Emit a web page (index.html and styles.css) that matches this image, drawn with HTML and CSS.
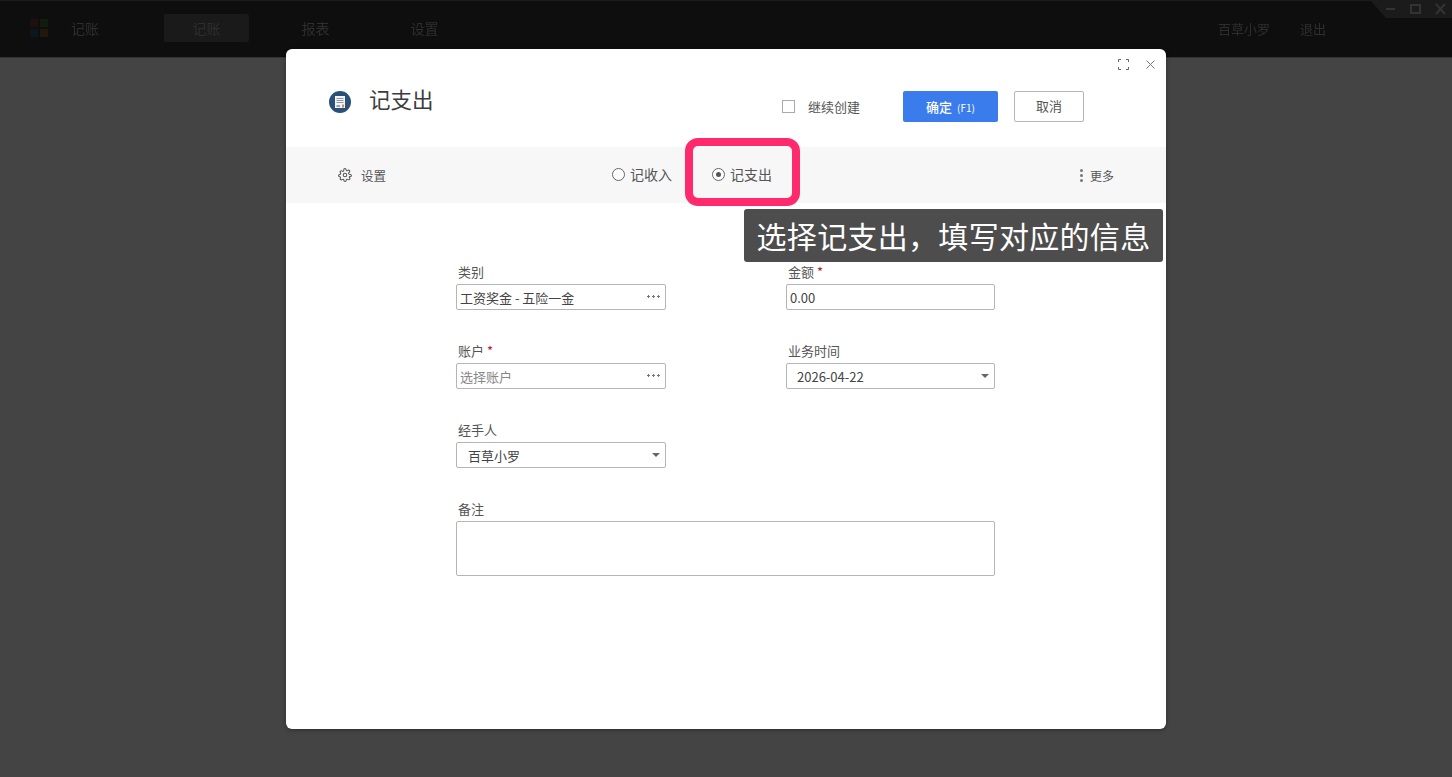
FILE: index.html
```html
<!DOCTYPE html>
<html lang="zh-CN">
<head>
  <meta charset="UTF-8">
  <title>记账</title>
  <link rel="stylesheet" href="styles.css">
</head>
<body>
  <header class="app-bar">
    <svg class="app-logo" width="18" height="18" viewBox="0 0 18 18">
      <rect x="0" y="0" width="8" height="8" fill="#1f0f0d"/>
      <rect x="10" y="0" width="8" height="8" fill="#121b0e"/>
      <rect x="0" y="10" width="8" height="8" fill="#0b1620"/>
      <rect x="10" y="10" width="8" height="8" fill="#20190a"/>
    </svg>
    <span class="app-name">记账</span>
    <nav class="app-nav">
      <a class="nav-item active">记账</a>
      <a class="nav-item">报表</a>
      <a class="nav-item">设置</a>
    </nav>
    <div class="app-user">
      <span>百草小罗</span>
      <span>退出</span>
    </div>
    <div class="win-controls">
      <svg width="70" height="14" viewBox="0 0 70 14" fill="none" stroke="#333" stroke-width="2">
        <path d="M4 7h9"/>
        <rect x="29" y="3" width="9" height="8"/>
        <path d="M54 2l9 10M63 2l-9 10"/>
      </svg>
    </div>
  </header>

  <section class="modal">
    <div class="modal-tools">
      <svg width="11" height="11" viewBox="0 0 11 11" fill="none" stroke="#666" stroke-width="1">
        <path d="M.5 3v-2.500h2.500M8 .5h2.500v2.500M10.500 8v2.500h-2.500M3 10.500h-2.500v-2.500"/>
      </svg>
      <svg width="9" height="9" viewBox="0 0 9 9" fill="none" stroke="#777" stroke-width="1">
        <path d="M.5 .5l8 8M8.500 .5l-8 8"/>
      </svg>
    </div>

    <div class="modal-head">
      <svg class="head-icon" width="22" height="22" viewBox="0 0 22 22">
        <circle cx="11" cy="11" r="11" fill="#2a5078"/>
        <rect x="6" y="5" width="10" height="12" fill="#f2f4f6"/>
        <path d="M7.500 7.500h7M7.500 9.500h7M7.500 11.500h7" stroke="#8b97a5" stroke-width="1"/>
        <path d="M7.500 15h3.500" stroke="#2a5078" stroke-width="1"/>
        <rect x="13" y="13.500" width="2" height="3" fill="#e8804a"/>
      </svg>
      <h1 class="head-title">记支出</h1>
      <label class="keep-open">
        <span class="checkbox"></span>
        继续创建
      </label>
      <button class="btn btn-primary">确定<small>(F1)</small></button>
      <button class="btn btn-plain">取消</button>
    </div>

    <div class="toolbar">
      <div class="tool-settings">
        <svg width="14" height="14" viewBox="0 0 24 24" fill="none" stroke="#555" stroke-width="1.800" stroke-linecap="round" stroke-linejoin="round">
          <circle cx="12" cy="12" r="3"/>
          <path d="M19.400 15a1.650 1.650 0 0 0 .33 1.820l.06.06a2 2 0 1 1-2.830 2.830l-.06-.06a1.650 1.650 0 0 0-2.820 1.170V21a2 2 0 1 1-4 0v-.09a1.650 1.650 0 0 0-2.820-1.170l-.06.06a2 2 0 1 1-2.830-2.830l.06-.06A1.650 1.650 0 0 0 3.090 15H3a2 2 0 1 1 0-4h.09a1.650 1.650 0 0 0 1.170-2.820l-.06-.06a2 2 0 1 1 2.830-2.830l.06.06A1.650 1.650 0 0 0 9.910 4.180V3a2 2 0 1 1 4 0v.09a1.650 1.650 0 0 0 2.820 1.170l.06-.06a2 2 0 1 1 2.830 2.830l-.06.06A1.650 1.650 0 0 0 20.910 11H21a2 2 0 1 1 0 4h-.09a1.650 1.650 0 0 0-1.510 0z"/>
        </svg>
        <span>设置</span>
      </div>
      <div class="radio-group">
        <label class="radio"><span class="radio-dot"></span>记收入</label>
        <label class="radio checked"><span class="radio-dot"></span>记支出</label>
      </div>
      <div class="tool-more">
        <span class="more-dots"><i></i><i></i><i></i></span>
        <span>更多</span>
      </div>
    </div>

    <form class="bill-form">
      <div class="field">
        <label class="field-label">类别</label>
        <div class="input">工资奖金 - 五险一金<span class="input-more"></span></div>
      </div>
      <div class="field">
        <label class="field-label">金额<em>*</em></label>
        <div class="input input-number">0.00</div>
      </div>
      <div class="field">
        <label class="field-label">账户<em>*</em></label>
        <div class="input placeholder">选择账户<span class="input-more"></span></div>
      </div>
      <div class="field">
        <label class="field-label">业务时间</label>
        <div class="input select select-date">2026-04-22<span class="caret"></span></div>
      </div>
      <div class="field">
        <label class="field-label">经手人</label>
        <div class="input select">百草小罗<span class="caret"></span></div>
      </div>
      <div class="field"></div>
      <div class="field field-wide">
        <label class="field-label">备注</label>
        <div class="input textarea"></div>
      </div>
    </form>
  </section>

  <div class="highlight-box"></div>
  <div class="hint">选择记支出，填写对应的信息</div>
</body>
</html>
```

FILE: styles.css
```css
* {
  margin: 0;
  padding: 0;
  box-sizing: border-box;
}

body {
  position: relative;
  height: 777px;
  overflow: hidden;
  background: #444444;
  font-family: "Noto Sans CJK SC", "Noto Sans", sans-serif;
  font-size: 13px;
  color: #444;
}

.app-bar {
  display: flex;
  align-items: center;
  height: 58px;
  padding: 0 0 2px 30px;
  background: #0e0e0e;
  border-top: 1px solid #1c1c1c;
  border-bottom: 1px solid #333;
  color: #2e2e2e;
  font-size: 14px;
}

.app-logo {
  filter: blur(0.5px);
}

.app-name {
  margin-left: 23px;
  width: 93px;
  filter: blur(0.6px);
}

.app-nav {
  display: flex;
  gap: 24px;
}

.nav-item {
  display: flex;
  align-items: center;
  justify-content: center;
  width: 85px;
  height: 28px;
  filter: blur(0.6px);
}

.nav-item.active {
  background: #1a1a1a;
  border-radius: 2px;
}

.app-user {
  display: flex;
  gap: 30px;
  margin-left: auto;
  margin-right: 126px;
  font-size: 13px;
  filter: blur(0.6px);
}

.win-controls {
  position: absolute;
  top: 0;
  right: 0;
  display: flex;
  justify-content: flex-end;
  align-items: center;
  width: 82px;
  height: 18px;
  background: #1b1b1b;
  clip-path: polygon(0 0, 100% 0, 100% 100%, 16px 100%);
  filter: blur(0.5px);
}

/* modal */
.modal {
  position: absolute;
  top: 49px;
  left: 286px;
  width: 880px;
  height: 680px;
  background: #fff;
  border-radius: 6px;
  box-shadow: 0 1px 4px rgba(0, 0, 0, 0.35);
}

.modal-tools {
  position: absolute;
  top: 10px;
  right: 11px;
  display: flex;
  align-items: center;
  gap: 17px;
}

.modal-head {
  display: flex;
  align-items: center;
  height: 98px;
  padding: 17px 82px 0 43px;
}

.head-icon {
  position: relative;
  top: -5px;
}

.head-title {
  margin-left: 18px;
  font-size: 21.500px;
  font-weight: 400;
  color: #3c3c3c;
  position: relative;
  top: -8px;
}

.keep-open {
  display: flex;
  align-items: center;
  margin-left: auto;
  margin-right: 43px;
  color: #555;
  font-size: 13px;
}

.checkbox {
  width: 13px;
  height: 13px;
  margin-right: 13px;
  border: 1px solid #aaa;
  background: #fff;
}

.btn {
  height: 31px;
  border-radius: 2px;
  font-family: inherit;
  font-size: 13px;
}

.btn-primary {
  width: 95px;
  margin-right: 16px;
  background: #3b7cec;
  border: none;
  color: #fff;
  font-weight: 500;
}

.btn-primary small {
  margin-left: 5px;
  font-size: 10px;
  font-weight: 400;
}

.btn-plain {
  width: 70px;
  background: #fff;
  border: 1px solid #b5b5b5;
  color: #555;
  padding-bottom: 3px;
}

.toolbar {
  display: grid;
  grid-template-columns: 274px auto 1fr;
  align-items: center;
  height: 56px;
  padding: 0 52px;
  background: #f7f7f7;
  color: #555;
}

.tool-settings {
  display: flex;
  align-items: center;
  gap: 9px;
  font-size: 12.500px;
}

.radio-group {
  display: flex;
  gap: 40px;
}

.radio {
  display: flex;
  align-items: center;
  gap: 5px;
  font-size: 14px;
  position: relative;
  top: -1px;
}

.radio-dot {
  display: flex;
  align-items: center;
  justify-content: center;
  width: 13px;
  height: 13px;
  border: 1px solid #666;
  border-radius: 50%;
  background: #fff;
}

.radio.checked .radio-dot::after {
  content: "";
  width: 5px;
  height: 5px;
  border-radius: 50%;
  background: #555;
}

.tool-more {
  display: flex;
  align-items: center;
  justify-content: flex-end;
  gap: 7px;
  font-size: 12px;
}

.more-dots {
  display: flex;
  flex-direction: column;
  gap: 2px;
}

.more-dots i {
  display: block;
  width: 3px;
  height: 3px;
  border-radius: 50%;
  background: #777;
}

/* form */
.bill-form {
  display: grid;
  grid-template-columns: 210px 209px;
  grid-auto-rows: 79px;
  column-gap: 120px;
  padding: 59px 0 0 170px;
}

.field-wide {
  grid-column: 1 / 3;
}

.field-label {
  display: block;
  height: 22px;
  padding-left: 2px;
  line-height: 19px;
  font-size: 13px;
  color: #555;
}

.field-label em {
  margin-left: 3px;
  color: #b8142e;
  font-style: normal;
}

.input {
  display: flex;
  align-items: center;
  justify-content: space-between;
  height: 26px;
  padding: 0 4px 0 3px;
  background: #fff;
  border: 1px solid #b5b5b5;
  border-radius: 2px;
  font-size: 13px;
  color: #444;
}

.input.placeholder {
  color: #888;
}

.input.select {
  padding-left: 11px;
}

.input.select-date {
  padding-left: 10px;
}

.input.textarea {
  height: 55px;
}

/* the three small dots on the picker inputs */
.input-more {
  width: 14px;
  height: 3px;
  margin: 0 1px 2px 0;
  background: radial-gradient(circle, #777 1px, transparent 1.300px) 0 0 / 5px 3px repeat-x;
}

.caret {
  width: 0;
  height: 0;
  margin-right: 1px;
  border-left: 4px solid transparent;
  border-right: 4px solid transparent;
  border-top: 4px solid #666;
}

/* tutorial overlay */
.highlight-box {
  position: absolute;
  top: 138px;
  left: 685px;
  width: 115px;
  height: 68px;
  border: 8px solid #ff2a6d;
  border-radius: 13px;
}

.hint {
  position: absolute;
  top: 209px;
  left: 744px;
  width: 419px;
  height: 53px;
  line-height: 53px;
  text-align: center;
  background: #4d4d4d;
  border-radius: 3px;
  color: #fff;
  font-size: 30px;
  letter-spacing: 0.300px;
  white-space: nowrap;
}
```
